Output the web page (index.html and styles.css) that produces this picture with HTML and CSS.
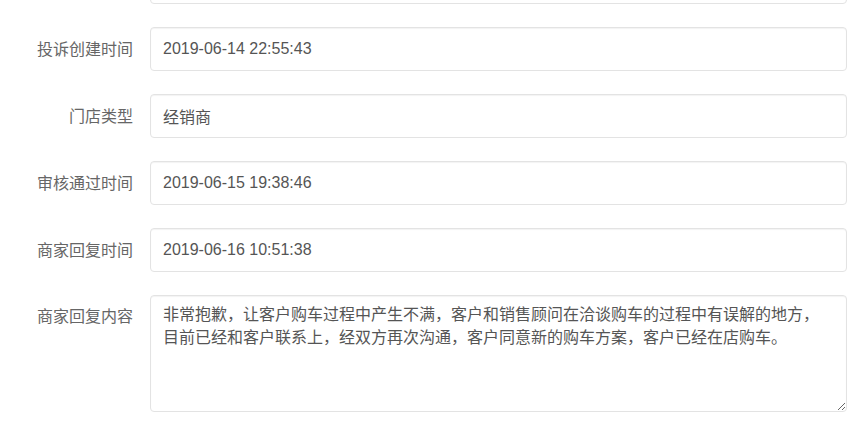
FILE: index.html
```html
<!DOCTYPE html>
<html lang="zh-CN">
<head>
<meta charset="utf-8">
<title>投诉详情</title>
<link rel="stylesheet" href="styles.css">
</head>
<body>
<form class="detail-form">
  <div class="form-row">
    <span class="form-label"></span>
    <input class="form-control" type="text" readonly value="">
  </div>
  <div class="form-row">
    <label class="form-label">投诉创建时间</label>
    <input class="form-control" type="text" readonly value="2019-06-14 22:55:43">
  </div>
  <div class="form-row">
    <label class="form-label">门店类型</label>
    <input class="form-control" type="text" readonly value="经销商">
  </div>
  <div class="form-row">
    <label class="form-label">审核通过时间</label>
    <input class="form-control" type="text" readonly value="2019-06-15 19:38:46">
  </div>
  <div class="form-row">
    <label class="form-label">商家回复时间</label>
    <input class="form-control" type="text" readonly value="2019-06-16 10:51:38">
  </div>
  <div class="form-row form-row-top">
    <label class="form-label form-label-top">商家回复内容</label>
    <textarea class="form-control form-textarea" readonly>非常抱歉，让客户购车过程中产生不满，客户和销售顾问在洽谈购车的过程中有误解的地方，
目前已经和客户联系上，经双方再次沟通，客户同意新的购车方案，客户已经在店购车。</textarea>
  </div>
</form>
</body>
</html>
```

FILE: styles.css
```css
html, body {
  margin: 0;
  padding: 0;
  background: #ffffff;
}

body {
  width: 865px;
  height: 424px;
  overflow: hidden;
  font-family: "Liberation Sans", "Noto Sans CJK SC", sans-serif;
  font-size: 16px;
  color: #555555;
}

.detail-form {
  margin-top: -40px;
  display: flex;
  flex-direction: column;
  gap: 23px;
}

.form-row {
  display: grid;
  grid-template-columns: 133px 697px;
  column-gap: 17px;
  align-items: center;
}

.form-row-top {
  align-items: start;
}

.form-label {
  text-align: right;
  font-size: 16px;
  line-height: 23px;
  color: #666666;
  white-space: nowrap;
}

.form-label-top {
  padding-top: 10px;
}

.form-control {
  box-sizing: border-box;
  display: block;
  width: 697px;
  height: 44px;
  margin: 0;
  padding: 0 12px;
  font-family: "Liberation Sans", "Noto Sans CJK SC", sans-serif;
  font-size: 16px;
  color: #555555;
  background: #ffffff;
  border: 1px solid #e3e3e3;
  border-radius: 4px;
  box-shadow: inset 0 1px 1px rgba(0, 0, 0, 0.05);
  outline: none;
}

.form-textarea {
  height: 117px;
  padding: 7px 12px;
  line-height: 23px;
  resize: vertical;
  overflow: hidden;
}
```
